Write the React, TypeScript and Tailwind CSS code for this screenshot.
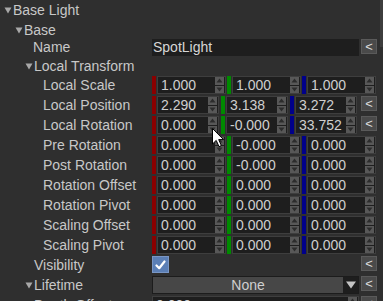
import React from "react"

const FONT = { fontFamily: '"Liberation Sans", Arial, sans-serif' }

function Caret() {
  return (
    <svg width="8" height="7" viewBox="0 0 8 7" className="shrink-0">
      <path d="M0.5 0.5 L7.5 0.5 L4 6.5 Z" fill="#a8a8a8" />
    </svg>
  )
}

function Spinner() {
  return (
    <div className="flex flex-col gap-[1px] w-[9px] h-[16px] mr-[1px] shrink-0">
      <div className="flex-1 bg-[#585858] flex items-center justify-center">
        <svg width="7" height="5" viewBox="0 0 7 5">
          <path d="M0.5 4.5 L3.5 0.5 L6.5 4.5 Z" fill="#2c2c2c" />
        </svg>
      </div>
      <div className="flex-1 bg-[#585858] flex items-center justify-center">
        <svg width="7" height="5" viewBox="0 0 7 5">
          <path d="M0.5 0.5 L6.5 0.5 L3.5 4.5 Z" fill="#2c2c2c" />
        </svg>
      </div>
    </div>
  )
}

function NumField({ value, w }: { value: string; w: string }) {
  return (
    <div className={`${w} h-[18px] flex items-center border border-[#3e3e3e] bg-[#1e1e1e] shrink-0`}>
      <span className="flex-1 pl-[3px] text-[14px] leading-none text-[#cfcfcf] overflow-hidden whitespace-nowrap">
        {value}
      </span>
      <Spinner />
    </div>
  )
}

function Back() {
  return (
    <div className="w-[16px] h-[15px] ml-[2px] flex items-center justify-center bg-[#4a4a4a] border border-[#5a5a5a] text-[#dcdcdc] text-[13px] leading-none shrink-0">
      &lt;
    </div>
  )
}

function Label({ text, pl, caret }: { text: string; pl: string; caret?: boolean }) {
  return (
    <div className={`w-[152px] shrink-0 flex items-center ${pl} text-[14px] text-[#c8c8c8] whitespace-nowrap`}>
      {caret && (
        <span className="w-[8px] mr-[1px] flex">
          <Caret />
        </span>
      )}
      {text}
    </div>
  )
}

const bars = ["bg-[#8a0000]", "bg-[#008a00]", "bg-[#00008a]"]

function Vec3Row({ label, values, back }: { label: string; values: string[]; back?: boolean }) {
  return (
    <div className="flex h-[20px] shrink-0 items-start">
      <div className="h-[18px] flex">
        <Label text={label} pl="pl-[43px]" />
      </div>
      <div className="flex">
        {values.map((v, i) => (
          <div key={i} className={`flex ${back ? "w-[69px]" : "w-[75px]"}`}>
            <div className={`w-[4px] h-[18px] ${bars[i]}`} />
            <div className="w-[1px]" />
            <NumField value={v} w={back ? "w-[62px]" : "w-[69px]"} />
          </div>
        ))}
        {back && <Back />}
      </div>
    </div>
  )
}

function Cursor() {
  return (
    <svg
      width="13"
      height="20"
      viewBox="0 0 13 20"
      className="absolute left-[212px] top-[128px] pointer-events-none"
    >
      <path
        d="M0.5 0.5 L0.5 16 L4.2 12.4 L7 18.6 L9.4 17.6 L6.7 11.6 L11.5 11.6 Z"
        fill="#ffffff"
        stroke="#000000"
        strokeWidth="1"
        strokeLinejoin="round"
      />
    </svg>
  )
}

export default function App() {
  const rows: { label: string; values: string[]; back?: boolean }[] = [
    { label: "Local Scale", values: ["1.000", "1.000", "1.000"] },
    { label: "Local Position", values: ["2.290", "3.138", "3.272"], back: true },
    { label: "Local Rotation", values: ["0.000", "-0.000", "33.752"], back: true },
    { label: "Pre Rotation", values: ["0.000", "-0.000", "0.000"] },
    { label: "Post Rotation", values: ["0.000", "-0.000", "0.000"] },
    { label: "Rotation Offset", values: ["0.000", "0.000", "0.000"] },
    { label: "Rotation Pivot", values: ["0.000", "0.000", "0.000"] },
    { label: "Scaling Offset", values: ["0.000", "0.000", "0.000"] },
    { label: "Scaling Pivot", values: ["0.000", "0.000", "0.000"] },
  ]

  return (
    <div style={FONT} className="relative w-[383px] h-[301px] overflow-hidden bg-[#2f2f2f] flex">
      <div className="w-[380px] flex flex-col">
        {/* tree header */}
        <div className="h-[21px] shrink-0 flex">
          <Label text="Base Light" pl="pl-[4px]" caret />
        </div>
        <div className="h-[18px] shrink-0 flex">
          <Label text="Base" pl="pl-[15px]" caret />
        </div>
        <div className="h-[18px] shrink-0 flex items-start">
          <div className="h-[17px] flex">
            <Label text="Name" pl="pl-[33px]" />
          </div>
          <div className="w-[207px] h-[17px] flex items-center bg-[#1e1e1e] pl-[1px] text-[14px] text-[#d6d6d6]">
            SpotLight
          </div>
          <Back />
        </div>
        <div className="h-[19px] shrink-0 flex">
          <Label text="Local Transform" pl="pl-[25px]" caret />
        </div>

        {rows.map((r) => (
          <Vec3Row key={r.label} label={r.label} values={r.values} back={r.back} />
        ))}

        {/* visibility */}
        <div className="flex h-[20px] shrink-0 items-start">
          <div className="h-[18px] flex">
            <Label text="Visibility" pl="pl-[34px]" />
          </div>
          <div className="w-[207px] flex">
            <div className="w-[17px] h-[17px] bg-[#5b7fb6] border border-[#7996c4] flex items-center justify-center">
              <svg width="11" height="10" viewBox="0 0 11 10">
                <path d="M1.5 5.5 L4.2 8.2 L9.5 1.5" fill="none" stroke="#ffffff" strokeWidth="2.2" strokeLinecap="round" strokeLinejoin="round" />
              </svg>
            </div>
          </div>
          <Back />
        </div>

        {/* lifetime */}
        <div className="flex h-[20px] shrink-0 items-start">
          <div className="h-[18px] flex">
            <Label text="Lifetime" pl="pl-[25px]" caret />
          </div>
          <div className="w-[207px] h-[18px] flex border border-[#1c1c1c]">
            <div className="flex-1 bg-[#474747] flex items-center justify-center text-[14px] text-[#cfcfcf]">
              None
            </div>
            <div className="w-[15px] bg-[#1e1e1e] flex items-center justify-center">
              <svg width="10" height="8" viewBox="0 0 10 8">
                <path d="M0 0.5 L10 0.5 L5 7.5 Z" fill="#c4c4c4" />
              </svg>
            </div>
          </div>
          <Back />
        </div>

        {/* depth offset (cut off) */}
        <div className="flex h-[20px] shrink-0 items-start">
          <div className="h-[18px] flex">
            <Label text="Depth Offset" pl="pl-[34px]" />
          </div>
          <NumField value="0.000" w="w-[207px]" />
          <Back />
        </div>
      </div>

      {/* scrollbar */}
      <div className="w-[3px] flex flex-col">
        <div className="h-[47px] bg-[#3d3d3d]" />
      </div>

      <Cursor />
    </div>
  )
}
